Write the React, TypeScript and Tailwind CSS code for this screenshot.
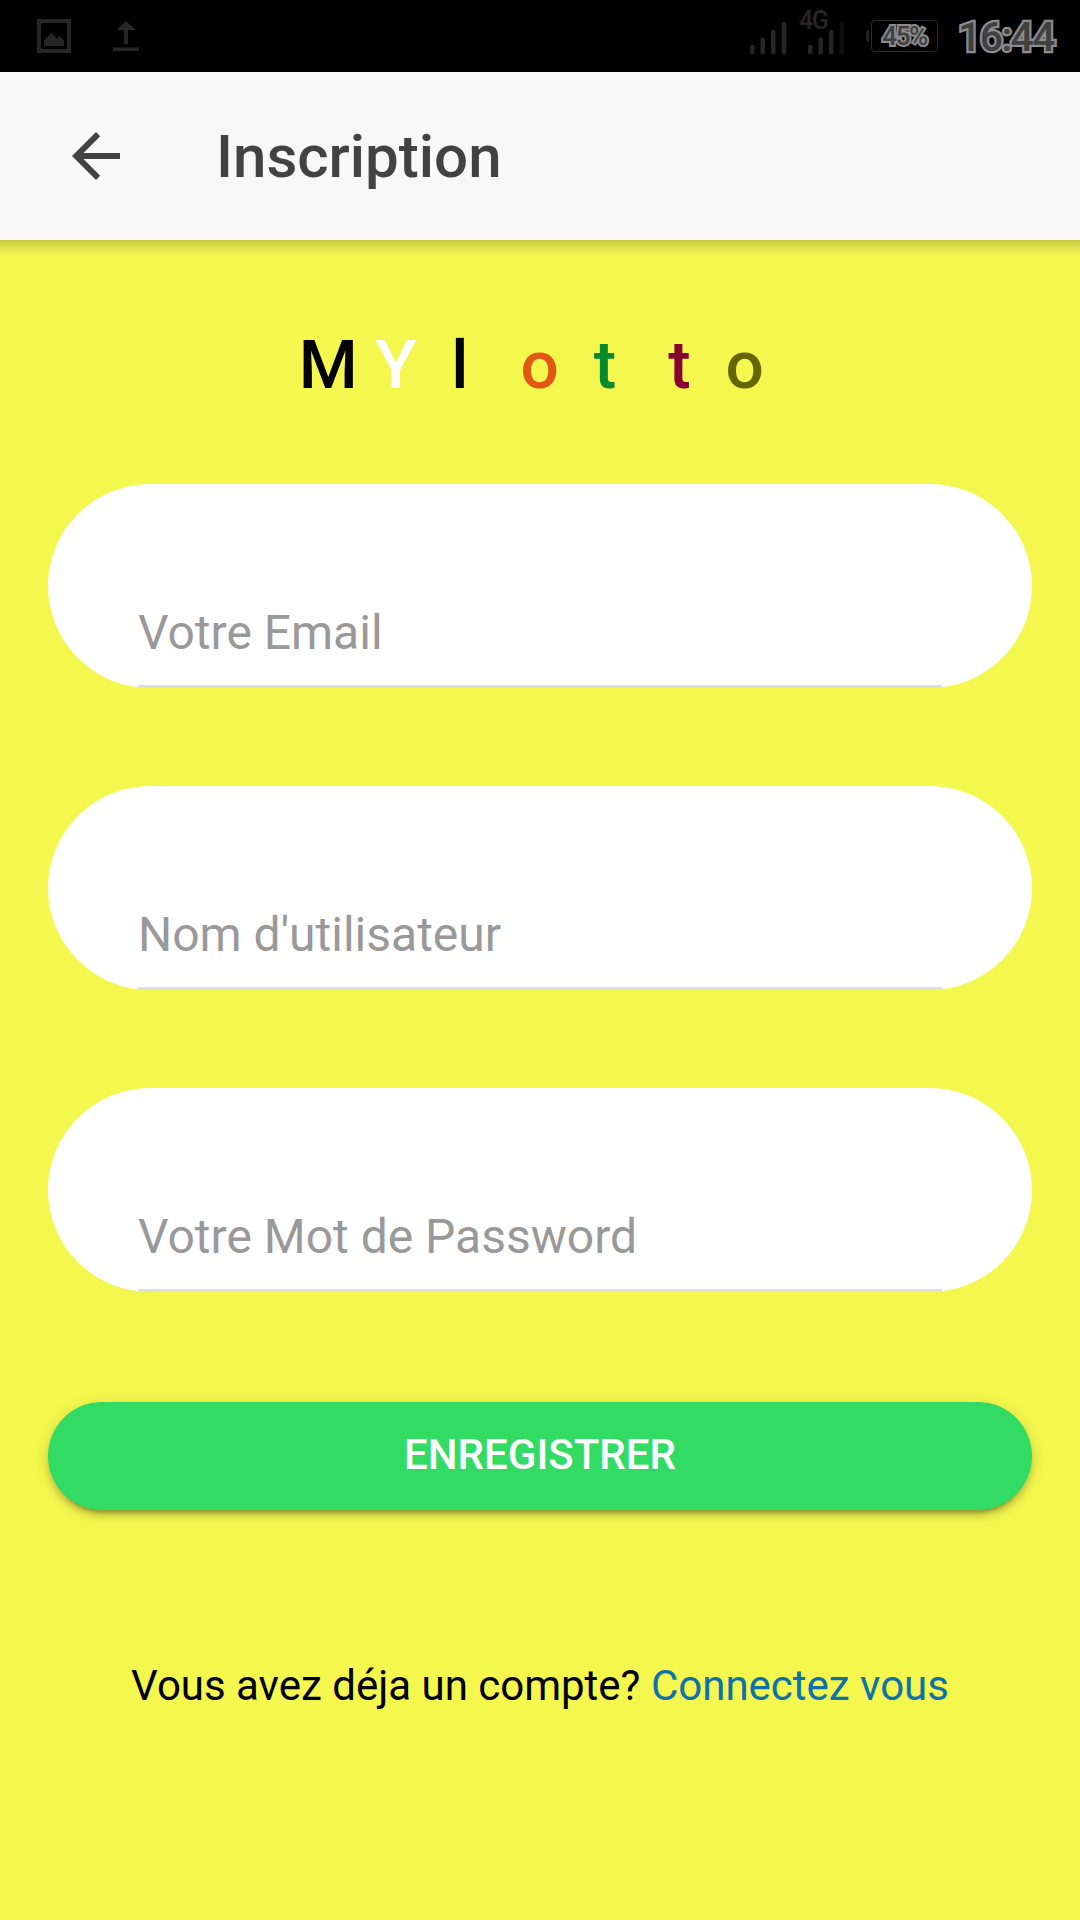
const letters = [
  { char: 'M ', color: 'text-black' },
  { char: 'Y  ', color: 'text-white' },
  { char: 'l   ', color: 'text-black' },
  { char: 'o  ', color: 'text-[#e35714]' },
  { char: 't   ', color: 'text-[#078930]' },
  { char: 't  ', color: 'text-[#890531]' },
  { char: 'o ', color: 'text-[#666600]' },
];

const fields = ['Votre Email', "Nom d'utilisateur", 'Votre Mot de Password'];

function StatusBar() {
  return (
    <div className="h-[72px] bg-black flex items-start justify-between pl-[37px] pr-[24px]">
      {/* Notifications */}
      <div className="flex items-start pt-[19px] gap-[42px]">
        <svg width="34" height="34" viewBox="0 0 34 34">
          <rect x="2" y="2" width="30" height="30" fill="none" stroke="#262626" strokeWidth="4" />
          <path d="M7 27V21.500L14.500 14L20 19.500L22.500 17L27 21.500V27Z" fill="#262626" />
        </svg>
        <svg width="26" height="34" viewBox="0 0 26 34" fill="#262626">
          <path d="M13 2L22.500 11H15V25H11V11H3.500Z" />
          <rect y="28.500" width="26" height="3.500" />
        </svg>
      </div>

      {/* Network, battery and clock */}
      <div className="flex items-start">
        <svg width="37" height="72" viewBox="0 0 37 72" fill="#262626">
          <rect x="0" y="45" width="4.500" height="9" rx="1.500" />
          <rect x="10.500" y="37.500" width="4.500" height="16.500" rx="1.500" />
          <rect x="21" y="30" width="4.500" height="24" rx="1.500" />
          <rect x="31.700" y="22" width="4.500" height="32" rx="1.500" />
        </svg>
        <div className="relative ml-[21px] w-[36px] h-[72px]">
          <svg width="36" height="72" viewBox="0 0 36 72" fill="#262626">
            <rect x="0" y="45" width="4.500" height="9" rx="1.500" />
            <rect x="10.500" y="37.500" width="4.500" height="16.500" rx="1.500" />
            <rect x="21" y="30" width="4.500" height="24" rx="1.500" />
            <rect x="31.500" y="22" width="4.500" height="32" rx="1.500" fill="#101010" />
          </svg>
          <span className="absolute left-[-9px] top-[8px] text-[25px] leading-[25px] font-medium text-[#262626] bg-black h-[21px] w-[29px] tracking-[-1.5px]">
            4G
          </span>
        </div>
        <div className="ml-[22px] mt-[30px] w-[3px] h-[12px] bg-[#222222] rounded-l-sm" />
        <div className="ml-[2px] mt-[20px] w-[67px] h-[32px] rounded-[4px] border border-[#2a2a2a] flex items-center justify-center text-[26px] leading-none font-medium text-[#404040] tracking-[-1.4px] [-webkit-text-stroke:4px_#8c8c8c] [paint-order:stroke_fill]">
          45%
        </div>
        <div className="ml-[20px] mt-[17px] w-[98px] text-[41px] leading-[41px] font-medium text-[#404040] tracking-[-1.6px] [-webkit-text-stroke:4.5px_#8c8c8c] [paint-order:stroke_fill]">
          16:44
        </div>
      </div>
    </div>
  );
}

export default function App() {
  return (
    <div className="w-[1080px] h-[1920px] bg-[#f4f74e] font-[Roboto,sans-serif] flex flex-col overflow-hidden">
      <StatusBar />

      {/* Toolbar */}
      <header className="h-[168px] shrink-0 bg-[#f8f8f8] flex items-center pl-[72px] text-[#424242]">
        <button className="mr-[96px]">
          <svg width="48" height="48" viewBox="0 0 48 48" fill="currentColor">
            <path d="M48 21H11.500L28.200 4.200L24 0L0 24L24 48L28.200 43.800L11.500 27H48Z" />
          </svg>
        </button>
        <h1 className="pt-[2px] text-[60px] leading-[72px] font-medium">Inscription</h1>
      </header>
      <div className="h-[16px] shrink-0 bg-linear-to-b from-black/20 via-black/8 to-transparent" />

      <main className="px-12 pt-[69px]">
        {/* Logo */}
        <div className="text-center whitespace-pre text-[67.5px] leading-[80px] font-medium [word-spacing:0.6px]">
          {letters.map((l, i) => (
            <span key={i} className={l.color}>{l.char}</span>
          ))}
        </div>

        <form className="mt-[79px] flex flex-col gap-[98px]">
          {fields.map((field) => (
            <div key={field} className="h-[204px] bg-white rounded-full px-[90px] flex">
              <label className="flex-1 border-b-3 border-[#dedede] pt-[121px] text-[48px] leading-[56px] text-[#999999]">
                {field}
              </label>
            </div>
          ))}
        </form>

        <button className="mt-[110px] w-full h-[108px] rounded-full bg-[#32db64] text-white text-[42px] leading-[42px] font-medium uppercase pb-[2px] shadow-[0_6px_6px_0_rgba(0,0,0,0.14),0_9px_3px_-6px_rgba(0,0,0,0.2),0_3px_15px_0_rgba(0,0,0,0.12)]">
          Enregistrer
        </button>

        <p className="mt-[151px] text-center text-[42px] leading-[50px] text-black">
          Vous avez déja un compte? <a className="text-[#0c71ac]">Connectez vous</a>
        </p>
      </main>
    </div>
  );
}
